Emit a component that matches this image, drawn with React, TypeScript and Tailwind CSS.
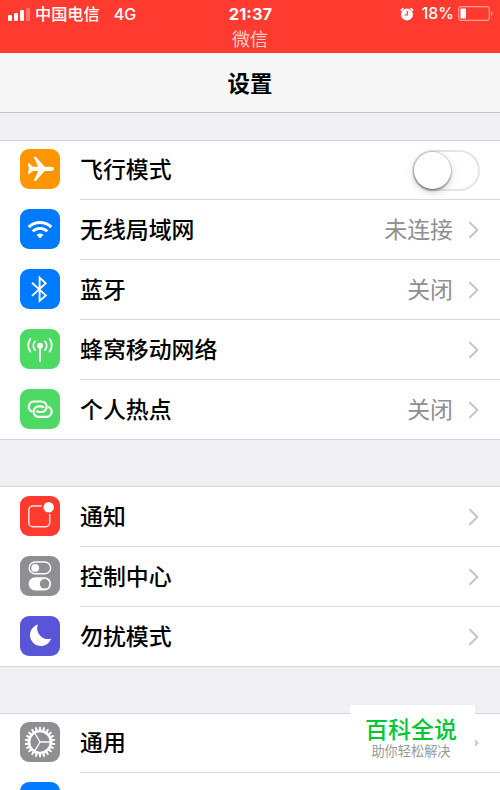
import type { ReactNode } from 'react';

interface RowData {
  label: string;
  color: string;
  icon: ReactNode;
  value?: string;
  toggle?: boolean;
  short?: boolean;
}

const AirplaneIcon = (
  <svg viewBox="0 0 40 40" className="w-full h-full" fill="white">
    <path d="M34 19.800c0-1.200-1.200-2.100-3-2.100h-6.300L16.300 8.200c-.5-.5-1.500-.8-2.600-.3l4.500 9.800h-5.400L9.300 14.500c-.4-.3-.9-.2-1.300 0l.8 5.300-.8 5.300c.4.200.9.300 1.300 0l3.500-3.200h5.400l-4.500 9.800c1.100.5 2.100.2 2.600-.3l8.400-9.500H31c1.800 0 3-.9 3-2.100z" />
  </svg>
);

const WifiIcon = (
  <svg viewBox="0 0 40 40" className="w-full h-full" fill="none" stroke="white" strokeWidth="2.900">
    <path d="M8.700 18.100a16.200 16.200 0 0 1 22.600 0" />
    <path d="M12.700 22.300a10.500 10.500 0 0 1 14.600 0" />
    <path d="M20 29.400l-3.400-3.500a4.900 4.900 0 0 1 6.800 0z" fill="white" stroke="none" />
  </svg>
);

const BluetoothIcon = (
  <svg viewBox="0 0 40 40" className="w-full h-full" fill="none" stroke="white" strokeWidth="1.900">
    <path d="M12 13.700l13.800 12.700-6.200 5.500V8.700l6.200 5.500L12 26.900" />
  </svg>
);

const CellularIcon = (
  <svg viewBox="0 0 40 40" className="w-full h-full" fill="none" stroke="white" strokeWidth="1.900" strokeLinecap="round">
    <circle cx="20" cy="16.800" r="3" fill="white" stroke="none" />
    <path d="M20 18v15" strokeLinecap="butt" strokeWidth="2" />
    <path d="M14.900 12.500a6.500 6.500 0 0 0 0 8.400M25.100 12.500a6.500 6.500 0 0 1 0 8.400" />
    <path d="M10.400 9.900a11 11 0 0 0 0 12.800M29.600 9.900a11 11 0 0 1 0 12.800" />
  </svg>
);

const HotspotIcon = (
  <svg viewBox="0 0 40 40" className="w-full h-full" fill="none" stroke="white" strokeWidth="2.200">
    <path d="M12.300 22.600a5.200 5.200 0 0 1 1.900-10.100h7.200a5.250 5.250 0 0 1 0 10.500h-2.700a2.500 2.500 0 0 1-2.200-1.500" />
    <path d="M28.100 17.800a5.200 5.200 0 0 1-2.100 10.100h-7.200a5.250 5.250 0 0 1 0-10.500h2.600a2.500 2.500 0 0 1 2.200 1.500" />
  </svg>
);

const NotificationIcon = (
  <svg viewBox="0 0 40 40" className="w-full h-full" fill="none" stroke="white" strokeWidth="1.500">
    <path d="M21.700 10H12.800a4 4 0 0 0-4 4v12.700a4 4 0 0 0 4 4h12.900a4 4 0 0 0 4-4V18" opacity=".85" />
    <circle cx="28.700" cy="11.200" r="5.200" fill="white" stroke="none" />
  </svg>
);

const ControlIcon = (
  <svg viewBox="0 0 40 40" className="w-full h-full">
    <rect x="9.200" y="6" width="21.400" height="11.800" rx="5.900" fill="none" stroke="white" strokeWidth="1.400" />
    <circle cx="15.200" cy="11.900" r="3.900" fill="white" />
    <rect x="8.600" y="21.200" width="22.600" height="13.200" rx="6.600" fill="white" />
    <circle cx="24.600" cy="27.800" r="4.800" fill="#8e8e93" />
  </svg>
);

const MoonIcon = (
  <svg viewBox="0 0 40 40" className="w-full h-full" fill="white">
    <path d="M17.900 8.600A10.900 10.900 0 1 0 31.200 22.500 10.700 10.700 0 0 1 17.900 8.600z" />
  </svg>
);

const TEETH = Array.from({ length: 22 }, (_, i) => (i * 360) / 22);

const GearIcon = (
  <svg viewBox="0 0 40 40" className="w-full h-full" fill="none" stroke="white">
    <circle cx="20" cy="20" r="10.900" strokeWidth="2.400" />
    {TEETH.map((deg) => (
      <path key={deg} d="M18.700 8.500l.5-3.800h1.600l.5 3.800z" fill="white" stroke="none" transform={`rotate(${deg} 20 20)`} />
    ))}
    <path d="M20 20h11M20 20l-5.500-9.500M20 20l-5.500 9.500" strokeWidth="1.400" />
  </svg>
);

const network: RowData[] = [
  { label: '飞行模式', color: 'bg-[#ff9500]', icon: AirplaneIcon, toggle: true, short: true },
  { label: '无线局域网', color: 'bg-[#007aff]', icon: WifiIcon, value: '未连接' },
  { label: '蓝牙', color: 'bg-[#007aff]', icon: BluetoothIcon, value: '关闭' },
  { label: '蜂窝移动网络', color: 'bg-[#4cd964]', icon: CellularIcon },
  { label: '个人热点', color: 'bg-[#4cd964]', icon: HotspotIcon, value: '关闭' },
];

const alerts: RowData[] = [
  { label: '通知', color: 'bg-[#ff3b30]', icon: NotificationIcon },
  { label: '控制中心', color: 'bg-[#8e8e93]', icon: ControlIcon },
  { label: '勿扰模式', color: 'bg-[#5856d6]', icon: MoonIcon },
];

const general: RowData[] = [
  { label: '通用', color: 'bg-[#8e8e93]', icon: GearIcon, short: true },
  { label: '', color: 'bg-[#007aff]', icon: null },
];

function Chevron() {
  return (
    <svg viewBox="0 0 12 18" className="w-3 h-[18px] shrink-0" fill="none" stroke="#c7c7cc" strokeWidth="2.200">
      <path d="M1.500 1.200L9.300 9l-7.800 7.800" />
    </svg>
  );
}

function Toggle() {
  return (
    <div className="w-[68px] h-[41px] rounded-full border-2 border-[#e5e5e5] bg-white">
      <div className="w-[37px] h-[37px] rounded-full bg-white shadow-[0_0_0_1px_rgba(0,0,0,0.12),0_2px_2px_rgba(0,0,0,0.3),0_3px_10px_rgba(0,0,0,0.18)]" />
    </div>
  );
}

function Row({ row, last }: { row: RowData; last: boolean }) {
  return (
    <div className={`flex pl-5 ${row.short ? 'h-[59px]' : 'h-[60px]'} ${last ? 'border-b border-[#d5d5d9]' : ''}`}>
      <div className={`flex items-center w-[60px] shrink-0 ${row.short ? 'pb-[3px]' : last ? 'pb-px' : 'pb-0.5'}`}>
        <div className={`w-10 h-10 rounded-[9px] overflow-hidden ${row.color}`}>{row.icon}</div>
      </div>
      <div className={`flex flex-1 items-center justify-between pr-5 ${last ? '' : 'border-b border-[#d9d9dc]'}`}>
        <span className={`text-[22.900px] leading-6 font-medium text-black ${row.short ? '' : 'pt-px'}`}>{row.label}</span>
        {row.toggle ? (
          <Toggle />
        ) : (
          <div className="flex items-center gap-[15px]">
            {row.value && <span className="pt-px text-[22.900px] leading-6 text-[#8e8e93]">{row.value}</span>}
            <Chevron />
          </div>
        )}
      </div>
    </div>
  );
}

function Group({ rows }: { rows: RowData[] }) {
  return (
    <section className="shrink-0 bg-white border-t border-[#d5d5d9]">
      {rows.map((row, i) => (
        <Row key={row.color + row.label} row={row} last={i === rows.length - 1} />
      ))}
    </section>
  );
}

function StatusBar() {
  return (
    <header className="h-[53px] shrink-0 bg-[#ff3b30] text-white">
      <div className="grid grid-cols-3 items-center h-7 pl-2 pr-[7px]">
        <div className="flex items-center">
          <svg viewBox="0 0 22 14" className="w-[22px] h-3.5" fill="white">
            <rect x="0" y="8" width="4" height="6" rx="1.200" />
            <rect x="6" y="6" width="4" height="8" rx="1.200" />
            <rect x="12" y="3" width="4" height="11" rx="1.200" />
            <rect x="18" y="1" width="4" height="13" rx="1.200" opacity=".3" />
          </svg>
          <span className="ml-[5px] text-[16.200px] leading-none font-medium">中国电信</span>
          <span className="ml-3.5 text-[16px] leading-none font-medium">4G</span>
        </div>
        <span className="text-center text-[16.500px] leading-none font-bold">21:37</span>
        <div className="flex items-center justify-end">
          <svg viewBox="0 0 14 14" className="w-3.5 h-3.5" fill="white">
            <circle cx="7" cy="7.500" r="5.900" />
            <path d="M.8 3.600L3.500 1M13.200 3.600L10.500 1" stroke="white" strokeWidth="1.600" />
            <path d="M7.300 4v4H4.500" fill="none" stroke="#ff3b30" strokeWidth="1.200" />
          </svg>
          <span className="ml-2 text-[15.800px] leading-none font-medium">18%</span>
          <svg viewBox="0 0 35 15" className="ml-1 w-[35px] h-[15px]">
            <rect x=".7" y=".7" width="30.600" height="13.600" rx="2.500" fill="none" stroke="white" strokeOpacity=".5" strokeWidth="1.200" />
            <rect x="2.500" y="2.500" width="5.500" height="10" rx=".8" fill="white" />
            <path d="M33 5a2.800 2.800 0 0 1 0 5z" fill="white" opacity=".5" />
          </svg>
        </div>
      </div>
      <div className="pt-[3px] text-center text-[18px] leading-[18px] text-white/75">微信</div>
    </header>
  );
}

export default function App() {
  return (
    <div className="relative w-[500px] h-[790px] overflow-hidden bg-[#efeff4] font-['Inter','Noto_Sans_CJK_SC',sans-serif]">
      <div className="flex flex-col">
        <StatusBar />
        <div className="flex items-center justify-center h-[60px] pt-[3px] shrink-0 bg-[#f6f6f6] border-b border-[#c4c4c8]">
          <h1 className="text-[22.400px] leading-none font-bold text-black">设置</h1>
        </div>

        <main className="flex flex-col pt-[27px]">
          <Group rows={network} />
          <div className="h-[46px]" />
          <Group rows={alerts} />
          <div className="h-[46px]" />
          <Group rows={general} />
        </main>
      </div>

      {/* 右下角角标 */}
      <div className="absolute left-[350px] top-[705px] w-[125px] h-[60px] pr-[3px] bg-white text-center">
        <div className="pt-[13px] text-[23px] leading-6 font-medium text-[#00c832]">百科全说</div>
        <div className="pt-px text-[13.200px] leading-4 text-[#999999]">助你轻松解决</div>
      </div>
    </div>
  );
}
